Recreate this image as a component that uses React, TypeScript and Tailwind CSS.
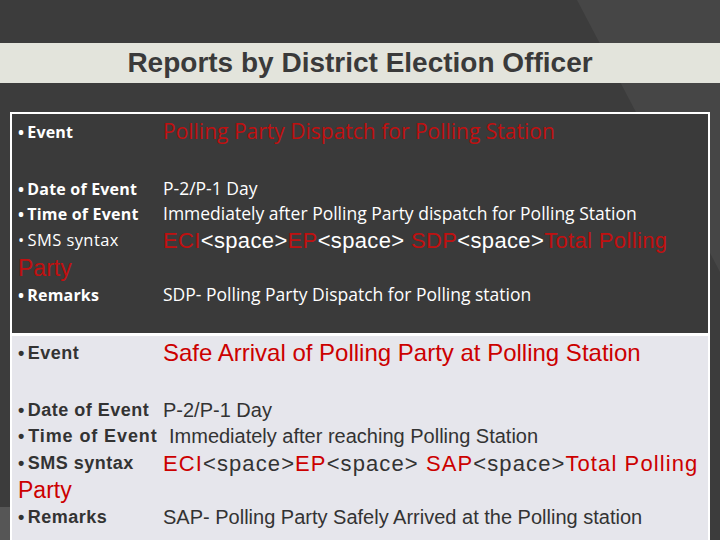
import React from 'react'

const calibri = "font-['Open_Sans','Noto_Sans',sans-serif]"
const arial = "font-['Liberation_Sans',Arial,sans-serif]"

function Label({ children, bold = true, className = '' }: { children: React.ReactNode; bold?: boolean; className?: string }) {
	return (
		<div className={`w-[145px] shrink-0 flex items-center ${bold ? 'font-bold' : ''} ${className}`}>
			<span className="mr-[3px]">•</span>
			{children}
		</div>
	)
}

function Row({ h, children }: { h: string; children: React.ReactNode }) {
	return <div className={`flex items-center pl-[6px] whitespace-nowrap ${h}`}>{children}</div>
}

export default function App() {
	return (
		<div className="relative w-[720px] h-[540px] overflow-hidden bg-[#3c3c3c]">
			<svg className="absolute inset-0" width="720" height="540" viewBox="0 0 720 540">
				<polygon points="577,0 720,0 720,272" fill="#464646" />
				<rect x="0" y="507" width="10" height="33" fill="#565656" />
			</svg>

			<div className="relative flex flex-col">
				<div className="h-[43px]" />
				<div className={`h-[40px] bg-[#e3e4dc] flex items-center justify-center ${arial}`}>
					<h1 className="text-[28px] font-bold text-[#3a3a3a]">Reports by District Election Officer</h1>
				</div>
				<div className="h-[29px]" />

				<div className="mx-[10px] border-2 border-b-0 border-white h-[428px] flex flex-col">
					{/* first event */}
					<div className={`h-[219px] bg-[#3a3a3a] text-white ${calibri}`}>
						<Row h="h-[36px]">
							<Label className="text-[16px] tracking-[0.2px]">Event</Label>
							<span className="text-[21px] text-[#c01010]">Polling Party Dispatch for Polling Station</span>
						</Row>
						<div className="h-[26px]" />
						<Row h="h-[25px]">
							<Label className="text-[16px] tracking-[0.2px]">Date of Event</Label>
							<span className="text-[17.5px]">P-2/P-1 Day</span>
						</Row>
						<Row h="h-[25px]">
							<Label className="text-[16px] tracking-[0.2px]">Time of Event</Label>
							<span className="text-[17.5px]">Immediately after Polling Party dispatch for Polling Station</span>
						</Row>
						<Row h="h-[29px]">
							<Label bold={false} className="text-[16.5px] tracking-[0.4px]">SMS syntax</Label>
							<span className={`text-[22px] tracking-[0.35px] ${arial}`}>
								<span className="text-[#c01010]">ECI</span>&lt;space&gt;<span className="text-[#c01010]">EP</span>&lt;space&gt;{' '}
								<span className="text-[#c01010]">SDP</span>&lt;space&gt;<span className="text-[#c01010]">Total Polling</span>
							</span>
						</Row>
						<Row h="h-[26px]">
							<span className={`text-[23px] text-[#c01010] ${arial}`}>Party</span>
						</Row>
						<Row h="h-[27px]">
							<Label className="text-[16px] tracking-[0.2px]">Remarks</Label>
							<span className="text-[17.5px]">SDP- Polling Party Dispatch for Polling station</span>
						</Row>
					</div>

					<div className="h-[3px] bg-white" />

					{/* second event */}
					<div className={`flex-1 bg-[#e6e6ec] text-[#333333] ${arial}`}>
						<Row h="h-[34px]">
							<Label className="text-[18px] tracking-[0.5px]">Event</Label>
							<span className="text-[24px] text-[#cc0000]">Safe Arrival of Polling Party at Polling Station</span>
						</Row>
						<div className="h-[27px]" />
						<Row h="h-[26px]">
							<Label className="text-[18px] tracking-[0.5px]">Date of Event</Label>
							<span className="text-[20px]">P-2/P-1 Day</span>
						</Row>
						<Row h="h-[26px]">
							<Label className="text-[18px] tracking-[0.9px]">Time of Event</Label>
							<span className="text-[20px] ml-[6px]">Immediately after reaching Polling Station</span>
						</Row>
						<Row h="h-[28px]">
							<Label className="text-[18px] tracking-[0.5px]">SMS syntax</Label>
							<span className="text-[22px] tracking-[1.1px]">
								<span className="text-[#cc0000]">ECI</span>&lt;space&gt;<span className="text-[#cc0000]">EP</span>&lt;space&gt;{' '}
								<span className="text-[#cc0000]">SAP</span>&lt;space&gt;<span className="text-[#cc0000]">Total Polling</span>
							</span>
						</Row>
						<Row h="h-[27px]">
							<span className="text-[23px] text-[#cc0000]">Party</span>
						</Row>
						<Row h="h-[26px]">
							<Label className="text-[18px] tracking-[0.5px]">Remarks</Label>
							<span className="text-[20px]">SAP- Polling Party Safely Arrived at the Polling station</span>
						</Row>
					</div>
				</div>
			</div>
		</div>
	)
}
